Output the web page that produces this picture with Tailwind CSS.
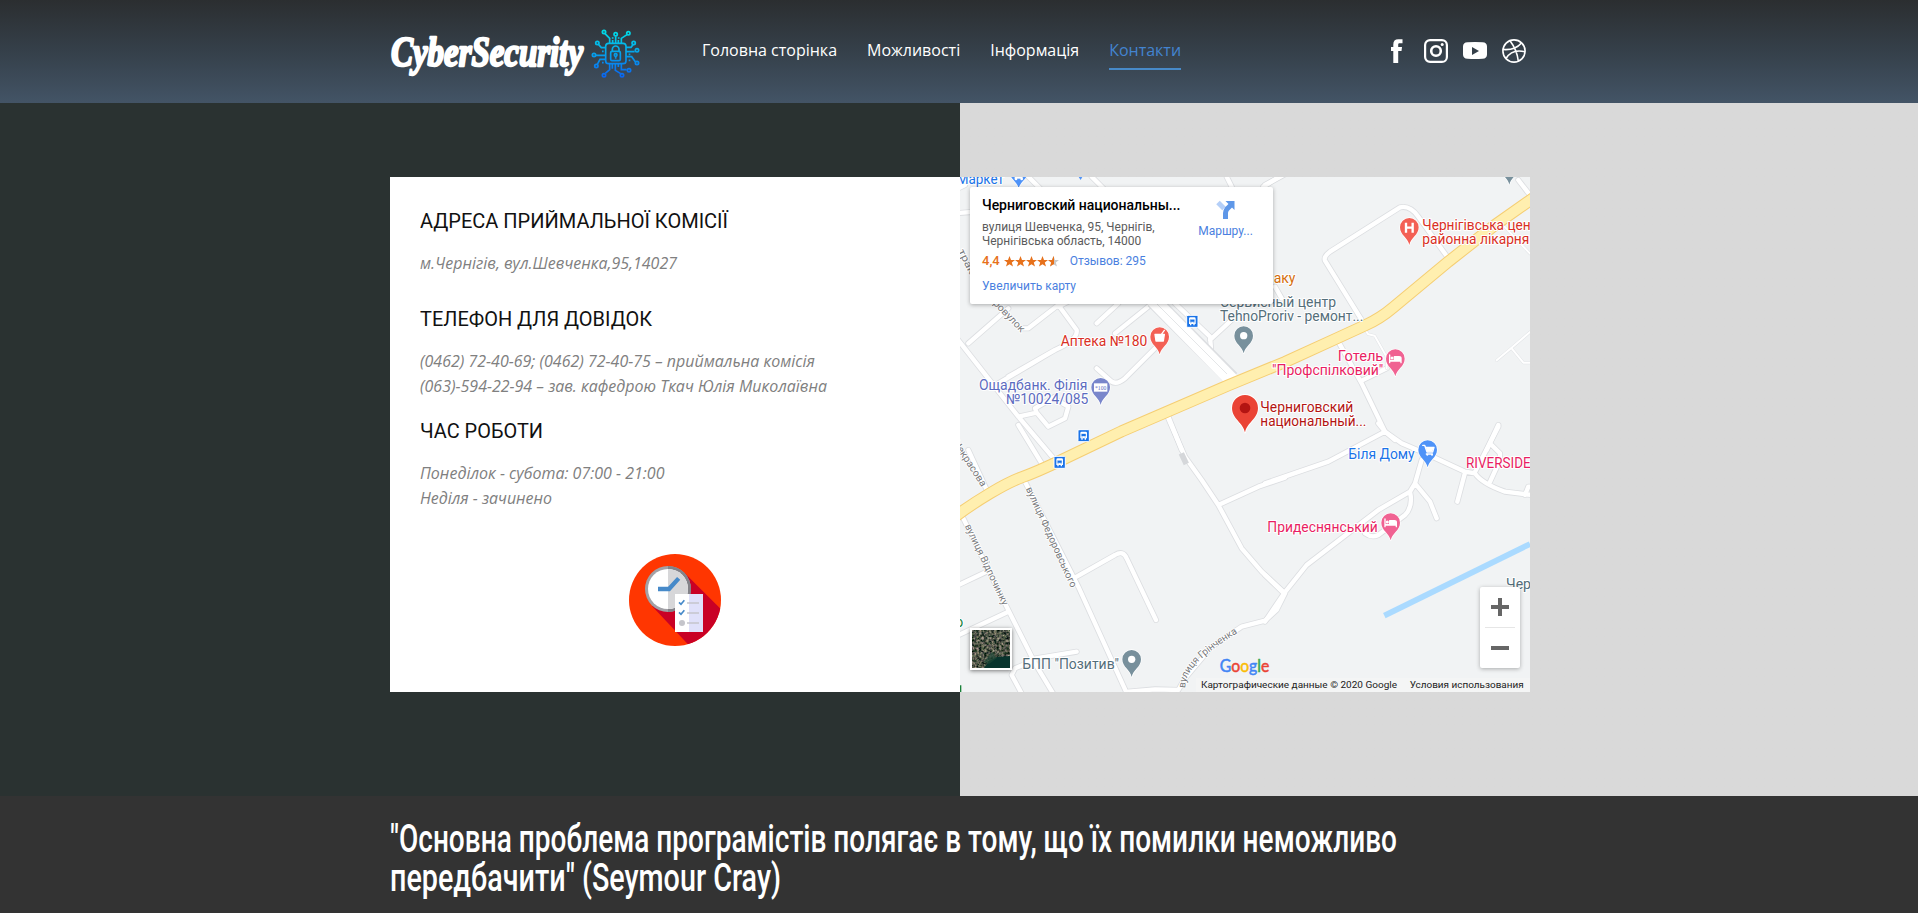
<!DOCTYPE html>
<html lang="uk">
<head>
<meta charset="utf-8">
<title>CyberSecurity – Контакти</title>
<script src="https://cdn.jsdelivr.net/npm/@tailwindcss/browser@4"></script>
</head>
<body class="h-[913px] overflow-hidden bg-[#333333] font-['Open_Sans',sans-serif]">
<header class="flex h-[103px] bg-linear-to-b from-[#2b2e30] via-[#35404a] to-[#435466]">
  <div class="mx-auto flex w-[1138px]">
    <a class="flex w-[312px] pt-[28px]">
      <svg class="h-[52px] w-[200px] overflow-visible" viewBox="0 0 200 52"><text x="1" y="38" textLength="192" lengthAdjust="spacingAndGlyphs" stroke-linejoin="round" class="fill-white stroke-white stroke-[2.4px] font-['Liberation_Serif',serif] text-[42px] font-bold italic">CyberSecurity</text></svg>
      <svg class="h-[50px] w-[50px]" viewBox="630 84 150 150" fill="none" stroke="url(#cy)" stroke-width="5">
        <defs><linearGradient id="cy" gradientUnits="userSpaceOnUse" x1="0" y1="88" x2="0" y2="233"><stop offset="0" stop-color="#00e0e6"/><stop offset="1" stop-color="#0a63f2"/></linearGradient></defs>
        <rect x="677" y="130" width="61" height="61" rx="9"/>
        <rect x="692" y="154" width="29" height="28" rx="4"/><path d="M697 154v-6a10 10 0 0 1 20 0v6M707 168v8"/><circle cx="707" cy="165" r="4"/>
        <path d="M689 129V115L675 101M707 129V109M724 129V115L741 104M677 143H664L656 134M677 166H648M677 178H660L652 193M738 142H753L759 134M738 155H764M738 170H755L766 185M689 191V209L676 220M706 191V211L722 221M724 191V209H740M715 129V120M698 129V120M697 191V206M715 191V201"/>
        <circle cx="672" cy="96" r="5"/><circle cx="707" cy="103" r="5"/><circle cx="745" cy="100" r="5"/><circle cx="652" cy="129" r="5"/><circle cx="642" cy="165" r="5"/><circle cx="649" cy="198" r="5"/><circle cx="761" cy="129" r="5"/><circle cx="771" cy="151" r="5"/><circle cx="771" cy="189" r="5"/><circle cx="672" cy="226" r="5"/><circle cx="726" cy="226" r="5"/><circle cx="747" cy="211" r="5"/>
        <path d="M666 154h5M746 163h5M746 181h5M666 188h5M698 112v4M716 112v4"/>
      </svg>
    </a>
    <nav class="flex w-[682.5px] gap-[30px] pt-[38px] text-[16px] leading-[24px] text-white">
      <a>Головна сторінка</a><a>Можливості</a><a>Інформація</a>
      <a class="h-[32px] border-b-2 border-[#478ac9] text-[#4384d0]">Контакти</a>
    </nav>
    <div class="flex gap-[15px] pt-[38.5px]">
      <svg class="h-6 w-6" viewBox="0 0 24 24" fill="#fff"><path d="M8.300 24V12H6V8h2.300V5.400C8.300 2 10 .2 13.300.2H17.500v4h-2.900c-1.200 0-1.400.6-1.400 1.600V8H17l-.5 4h-3.300v12z"/></svg>
      <svg class="h-6 w-6" viewBox="0 0 24 24" fill="none" stroke="#fff"><rect x="1.1" y="1.1" width="21.8" height="21.8" rx="5" stroke-width="2.2"/><circle cx="12" cy="12" r="4.8" stroke-width="2.6"/><circle cx="18.2" cy="5.6" r="1.5" fill="#fff" stroke="none"/></svg>
      <svg class="h-6 w-6" viewBox="0 0 24 24" fill="#fff" fill-rule="evenodd"><path d="M4.500 3.300Q12 2.600 19.500 3.300Q24 3.500 24 7.500V15.500Q24 19.600 19.500 19.800Q12 20.400 4.500 19.800Q0 19.600 0 15.500V7.500Q0 3.500 4.500 3.300zM9 8v8l7-4z"/></svg>
      <svg class="h-6 w-6" viewBox="0 0 24 24" fill="none" stroke="#fff" stroke-width="1.6"><circle cx="12" cy="12" r="11.1"/><path d="M8 1.800Q15 11 16.300 22M1 10.500Q13 11.500 19.500 4M4 19.500Q10 9.500 23 12.800"/></svg>
    </div>
  </div>
</header>

<main class="grid h-[693px] grid-cols-[960px_958px] bg-linear-to-r from-[#2a3231] from-[960px] to-[#d9d9d9] to-[960px]">
  <section class="mt-[74px] ml-[390px] h-[515px] w-[570px] bg-white pl-[30px]">
    <svg class="block h-[340px] w-[500px] font-['Open_Sans',sans-serif] text-[16.5px]" viewBox="0 0 500 340">
      <g class="fill-[#111111] font-['Roboto',sans-serif] text-[20px]">
        <text y="51" x="0" textLength="308" lengthAdjust="spacingAndGlyphs">АДРЕСА ПРИЙМАЛЬНОЇ КОМІСІЇ</text>
        <text y="149" x="0" textLength="232" lengthAdjust="spacingAndGlyphs">ТЕЛЕФОН ДЛЯ ДОВІДОК</text>
        <text y="261" x="0" textLength="123" lengthAdjust="spacingAndGlyphs">ЧАС РОБОТИ</text>
      </g>
      <g class="fill-[#808080] italic">
        <text y="92" x="0" textLength="257" lengthAdjust="spacingAndGlyphs">м.Чернігів, вул.Шевченка,95,14027</text>
        <text y="190" x="0" textLength="395" lengthAdjust="spacingAndGlyphs">(0462) 72-40-69; (0462) 72-40-75 – приймальна комісія</text>
        <text y="215" x="0" textLength="407" lengthAdjust="spacingAndGlyphs">(063)-594-22-94 – зав. кафедрою Ткач Юлія Миколаївна</text>
        <text y="302" x="0" textLength="244.500" lengthAdjust="spacingAndGlyphs">Понеділок - субота: 07:00 - 21:00</text>
        <text y="327" x="0" textLength="132" lengthAdjust="spacingAndGlyphs">Неділя - зачинено</text>
      </g>
    </svg>
    <svg class="mt-[37px] ml-[209px] block h-[92px] w-[92px]" viewBox="87 72 276 276">
      <defs><clipPath id="disc"><circle cx="225" cy="210" r="138"/></clipPath></defs>
      <g clip-path="url(#disc)"><rect x="87" y="72" width="276" height="276" fill="#ff3601"/><path d="M253 128L373 248V360H280L156 228z" fill="#c90125"/></g>
      <circle cx="204" cy="177" r="69" fill="#a2a1a6"/><path d="M204 108a69 69 0 0 1 0 138z" fill="#838288"/>
      <circle cx="204" cy="177" r="60" fill="#fff"/><path d="M204 117a60 60 0 0 1 0 120z" fill="#d7d7d9"/>
      <path d="M174 177H207L236 145" fill="none" stroke="#478ac9" stroke-width="13"/>
      <path fill="#fff" d="M225 192h42v114h-42z"/><path fill="#e0e1fa" d="M267 192h42v114h-42z"/>
      <path d="M237 217l6 6 10-12M237 247l6 6 10-12" fill="none" stroke="#478ac9" stroke-width="5"/><circle cx="246" cy="279" r="9" fill="#c5c5cb"/>
      <path d="M261 219h36M261 249h36M261 279h36" stroke="#c5c5cb" stroke-width="5"/>
    </svg>
  </section>

  <section class="relative mt-[74px] h-[515px] w-[570px] overflow-hidden bg-[#f1f3f4] font-['Roboto',sans-serif]">
    <svg class="block h-[515px] w-[570px]" viewBox="0 0 1710 1545" stroke-linecap="round" stroke-linejoin="round">
      <defs>
        <path id="pin" d="M0 53C-4 31-28 24-28 0A28 28 0 0 1 28 0C28 24 4 31 0 53z" stroke="#fff" stroke-width="4" paint-order="stroke"/>
        <g id="bus"><rect x="-17" y="-18" width="34" height="36" rx="3" fill="#1a73e8" stroke="#fff" stroke-width="3"/><path d="M-10-8q0-4 4-4H6q4 0 4 4V8H7v4H3V8H-3v4H-7V8h-3z" fill="#fff"/><path d="M-6-5H6V1H-6zM-6 4h3M3 4h3" fill="#1a73e8" stroke="#1a73e8" stroke-width="1"/></g>
        <g id="bed"><path d="M-17-11V12M-17 7H17V12M17 7V-1Q17-6 11-6H-3V6H-15" fill="none" stroke="#fff" stroke-width="4"/><path d="M-3-6H12Q17-6 17 0V7H-3z" fill="#fff" stroke="none"/><circle cx="-10" cy="-2" r="4.500" fill="#fff"/></g>
        <g id="roads" fill="none">
          <g transform="translate(-15,-21)">
            <path d="M0 498L190 740L300 870M0 130L60 125M0 40L45 30M40 520L160 415M130 640L300 540Q370 510 365 480L310 405L220 475H200M310 410L340 395M300 540L160 620M425 460L490 400M580 410L480 490M600 535L510 625Q485 645 470 635L425 595M190 740L245 728L280 770L330 745L340 710L305 690M245 728L240 715L300 680M410 20L450 60M815 20L830 50M925 50L990 10M640 740L680 840M660 400L765 500L768 535M765 510L835 445M220 20L260 60M0 60L30 45"/>
          </g>
          <g transform="translate(915,-21)">
            <path d="M0 45L65 10M550 265L460 140Q435 105 405 112L195 245Q175 260 180 272L290 450M760 30L810 95M30 350L50 385M220 515L290 640L360 785L390 810M290 632L365 595M700 765L665 840"/>
          </g>
          <g transform="translate(-15,759)">
            <path d="M190-15L260 100M40 60L100 190M640-35L690 80L740 150L790 225L860 355L920 425L990 490M790 225L910 170L990 143M25 265L120 460L240 700M0 470L95 425M0 620L160 545M240 690L180 715L170 735L205 800M215 690L365 665M210 155L370 470L520 800M365 440L480 375Q505 360 515 385L603 570M990 490L965 540L930 572L860 590L770 650L690 745L670 780L600 778L520 785M240 700L300 800"/>
          </g>
          <g transform="translate(915,759)">
            <path d="M0 160L190 95L360 5L410 40L480 70L600 125L630 130Q650 160 720 185L800 195M360 5L340-20M700-10L628 130M680 45L705 70L705 90L673 160M600 128L577 215M470 90L450 160L435 185L340 240L125 405L57 490L0 575M450 160L495 215L515 265M435 185Q445 230 420 255L380 285L340 315Q320 325 300 310M0 435L57 490M780 195L790 170H800"/>
          </g>
        </g>
      </defs>
      <use href="#roads" stroke="#dcdee1" stroke-width="18"/>
      <use href="#roads" stroke="#fff" stroke-width="13"/>
      <g fill="none"><path d="M1610 550L1653 514L1710 465M1655 514L1690 557H1710M1215 458L1225 472L1244 476L1280 540V574M1630 145L1710 230" stroke="#e1e3e6" stroke-width="9"/><path d="M1610 550L1653 514L1710 465M1655 514L1690 557H1710M1215 458L1225 472L1244 476L1280 540V574M1630 145L1710 230" stroke="#fff" stroke-width="6"/></g>
      <path d="M580 370L815 605" stroke="#dcdee1" stroke-width="48" stroke-linecap="butt"/><path d="M578 368L818 612" stroke="#fff" stroke-width="42" stroke-linecap="butt"/><path d="M578 368L800 590" stroke="#e4e6e8" stroke-width="3"/>
      <path d="M-15 1019Q30 985 90 949T190 899T305 849L485 763L805 625L975 555L1130 484L1215 445Q1260 425 1300 391L1465 254L1605 144L1730 56" fill="none" stroke="#f5ce73" stroke-width="36"/>
      <path d="M-15 1019Q30 985 90 949T190 899T305 849L485 763L805 625L975 555L1130 484L1215 445Q1260 425 1300 391L1465 254L1605 144L1730 56" fill="none" stroke="#ffefaf" stroke-width="30"/>
      <path d="M1273 1316L1710 1101" stroke="#aadaff" stroke-width="17" stroke-linecap="butt"/>
      <path d="M664 829L679 861" stroke="#d5d7da" stroke-width="17" stroke-linecap="butt"/>

      <g fill="#f36055"><use href="#pin" x="599" y="479"/><use href="#pin" x="1348" y="151"/></g>
      <g fill="#f06292"><use href="#pin" x="1306" y="545"/><use href="#pin" x="1292" y="1037"/></g>
      <g fill="#78909c"><use href="#pin" x="851" y="476"/><use href="#pin" x="515" y="1447"/><use href="#pin" x="1648" y="-30"/></g>
      <g fill="#4f93f8"><use href="#pin" x="1403" y="818"/><use href="#pin" x="176" y="-18"/></g>
      <use href="#pin" x="422" y="631" fill="#7986cb"/>
      <circle cx="851" cy="476" r="11" fill="#fff"/><circle cx="515" cy="1447" r="11" fill="#fff"/>
      <path d="M1338 137v30M1358 137v30M1338 152h20" stroke="#fff" stroke-width="7" stroke-linecap="butt"/>
      <path d="M585 472h28l-3 20h-22zM604 472l9-12" fill="#fff" stroke="#fff" stroke-width="4"/>
      <rect x="402" y="619" width="40" height="25" fill="#fff"/><text x="405" y="638" textLength="34" lengthAdjust="spacingAndGlyphs" class="fill-[#5c6bc0] font-['Liberation_Serif',serif] text-[18px]">*100</text>
      <use href="#bed" x="1306" y="545"/><use href="#bed" x="1292" y="1037"/>
      <path d="M1388 805h6l7 20h17l4-14h-24M1399 831h18" fill="none" stroke="#fff" stroke-width="4"/><path d="M1397 810h24l-4 14h-16z" fill="#fff"/><circle cx="1402" cy="833" r="3" fill="#fff"/><circle cx="1416" cy="833" r="3" fill="#fff"/>
      <path d="M164-5v10h24v-10" fill="#fff"/><circle cx="168" cy="6" r="4" fill="#fff"/><circle cx="185" cy="6" r="4" fill="#fff"/><path d="M356 0h11l-5 9z" fill="#4f93f8"/>
      <g transform="translate(855,693) scale(1.390)"><use href="#pin" fill="#ea4335"/><circle r="11.500" fill="#b31412"/></g>
      <use href="#bus" x="697" y="433"/><use href="#bus" x="371" y="776"/><use href="#bus" x="299" y="856"/>

      <g class="text-[42px]" stroke="#fff" stroke-width="6" paint-order="stroke">
        <g fill="#d93025">
          <text x="302" y="507" textLength="260" lengthAdjust="spacingAndGlyphs">Аптека №180</text>
          <text x="1387" y="159" textLength="325" lengthAdjust="spacingAndGlyphs">Чернігівська цен</text>
          <text x="1387" y="201" textLength="321" lengthAdjust="spacingAndGlyphs">районна лікарня</text>
        </g>
        <g fill="#5c6bc0">
          <text x="57" y="639" textLength="325" lengthAdjust="spacingAndGlyphs">Ощадбанк. Філія</text>
          <text x="138" y="681" textLength="247" lengthAdjust="spacingAndGlyphs">№10024/085</text>
        </g>
        <g fill="#e91e63">
          <text x="1133" y="552" textLength="137" lengthAdjust="spacingAndGlyphs">Готель</text>
          <text x="936" y="594" textLength="334" lengthAdjust="spacingAndGlyphs">"Профспілковий"</text>
          <text x="922" y="1065" textLength="331" lengthAdjust="spacingAndGlyphs">Придеснянський</text>
          <text x="1518" y="873" textLength="194" lengthAdjust="spacingAndGlyphs">RIVERSIDE</text>
        </g>
        <g fill="#546e7a">
          <text x="780" y="390" textLength="348" lengthAdjust="spacingAndGlyphs">Сервисный центр</text>
          <text x="780" y="432" textLength="430" lengthAdjust="spacingAndGlyphs">TehnoProriv - ремонт...</text>
          <text x="187" y="1476" textLength="290" lengthAdjust="spacingAndGlyphs">БПП "Позитив"</text>
          <text x="1638" y="1236" textLength="75" lengthAdjust="spacingAndGlyphs">Чер</text>
        </g>
        <g fill="#b31412">
          <text x="901" y="705" textLength="279" lengthAdjust="spacingAndGlyphs">Черниговский</text>
          <text x="901" y="747" textLength="318" lengthAdjust="spacingAndGlyphs">национальный...</text>
        </g>
        <g fill="#1a73e8">
          <text x="1165" y="846" textLength="199" lengthAdjust="spacingAndGlyphs">Біля Дому</text>
          <text x="-10" y="21" textLength="142" lengthAdjust="spacingAndGlyphs">Маркет</text>
        </g>
        <text x="941" y="318" fill="#d56e0c">аку</text>
        <text x="-14" y="1349" fill="#188038">о</text>
      </g>
      <path d="M0 1525h4v20H0z" fill="#188038"/>
      <g class="fill-[#77797c] text-[30px]" stroke="#fff" stroke-width="5" paint-order="stroke">
        <text transform="translate(197,935) rotate(65.500)" textLength="328" lengthAdjust="spacingAndGlyphs">вулиця Федоровського</text>
        <text transform="translate(14,1047) rotate(64.500)" textLength="266" lengthAdjust="spacingAndGlyphs">вулиця Відпочинку</text>
        <text transform="translate(-22,797) rotate(57)" textLength="160" lengthAdjust="spacingAndGlyphs">Некрасова</text>
        <text transform="translate(98,380) rotate(46)" textLength="122" lengthAdjust="spacingAndGlyphs">ровулок</text>
        <text transform="translate(-6,222) rotate(64)" textLength="80" lengthAdjust="spacingAndGlyphs">трак</text>
        <path id="hr" d="M675 1534Q678 1485 725 1445Q770 1405 838 1365" fill="none" stroke="none"/>
        <text><textPath href="#hr" textLength="238">вулиця Грінченка</textPath></text>
      </g>
      <text x="779" y="1484" textLength="149" lengthAdjust="spacingAndGlyphs" stroke-width="1.500" class="font-['Lato',sans-serif] text-[50px]"><tspan fill="#4285f4" stroke="#4285f4">G</tspan><tspan fill="#ea4335" stroke="#ea4335">o</tspan><tspan fill="#fbbc05" stroke="#fbbc05">o</tspan><tspan fill="#4285f4" stroke="#4285f4">g</tspan><tspan fill="#34a853" stroke="#34a853">l</tspan><tspan fill="#ea4335" stroke="#ea4335">e</tspan></text>
      <rect x="708" y="1503" width="1002" height="42" fill="#f5f5f5" opacity=".7"/>
      <g class="fill-[#222222] text-[27px]">
        <text x="723" y="1532" textLength="588" lengthAdjust="spacingAndGlyphs">Картографические данные © 2020 Google</text>
        <text x="1349" y="1532" textLength="342" lengthAdjust="spacingAndGlyphs">Условия использования</text>
      </g>
    </svg>

    <div class="absolute top-[10px] left-[10px] flex h-[117px] w-[303px] rounded-[2px] bg-white pl-[12px] text-[12px] leading-[14px] text-[#4a7fe0] shadow-[0_1px_4px_rgba(0,0,0,0.3)]">
      <div class="w-[208px] whitespace-nowrap">
        <div class="pt-[9px] text-[14px] leading-[18px] font-medium tracking-[-0.03px] text-black">Черниговский национальны...</div>
        <div class="mt-[6px] text-[#5b5b5b]">вулиця Шевченка, 95, Чернігів,<br>Чернігівська область, 14000</div>
        <div class="mt-[6px] flex items-center"><span class="text-[13px] font-medium text-[#e7711b]">4,4</span>
          <svg class="ml-[4px] h-[11px] w-[55px]" viewBox="0 0 55 11"><defs><path id="star" d="M5.500 0L7 4h4L7.800 6.500 9 10.500 5.500 8.200 2 10.500 3.200 6.500 0 4h4z"/><clipPath id="half"><path d="M0 0h6v11H0z"/></clipPath></defs><g fill="#e7711b"><use href="#star"/><use href="#star" x="11"/><use href="#star" x="22"/><use href="#star" x="33"/></g><use href="#star" x="44" fill="#c9c9c9"/><g transform="translate(44)"><use href="#star" fill="#e7711b" clip-path="url(#half)"/></g></svg>
          <span class="ml-[11px]">Отзывов: 295</span></div>
        <div class="mt-[11px]">Увеличить карту</div>
      </div>
      <div class="flex w-[71px] flex-col items-center pt-[13px]">
        <svg class="h-[20px] w-[20px]" viewBox="0 0 20 20" fill="none"><path d="M2 2.500L8 8.500" stroke="#b4cff8" stroke-width="5"/><path d="M9.500 19V13Q9.500 11 11 9L15 5" stroke="#5e97e8" stroke-width="5"/><path d="M9.500 1H18.500V10z" fill="#5e97e8"/></svg>
        <span class="mt-[4px]">Маршру...</span>
      </div>
    </div>

    <div class="absolute top-[451px] left-[10px] h-[42px] w-[42px] border-2 border-white shadow-[0_1px_4px_rgba(0,0,0,0.5)]">
      <svg class="block h-[38px] w-[38px]" viewBox="0 0 38 38"><defs><filter id="land" x="0" y="0" width="1" height="1" color-interpolation-filters="sRGB"><feTurbulence type="fractalNoise" baseFrequency=".4" numOctaves="3" seed="4"/><feColorMatrix values="1.1 0 0 0 -.24  .9 .15 0 0 -.19  .8 0 .1 0 -.17  0 0 0 0 1"/></filter></defs><rect width="38" height="38" filter="url(#land)"/><path d="M12 38L17 31 25 27 38 26V38z" fill="#08342d"/><path d="M12 32l8-10 5 6-8 6z" fill="#1d4636" opacity=".7"/></svg>
    </div>

    <div class="absolute top-[410px] left-[520px] flex h-[81px] w-[40px] flex-col items-center rounded-[2px] bg-white shadow-[0_1px_4px_rgba(0,0,0,0.3)]">
      <svg class="h-[81px] w-[40px]" viewBox="0 0 40 81"><path d="M11 20h18M20 11v18M11 61h18" stroke="#666" stroke-width="4"/><path d="M5 40.500h30" stroke="#e6e6e6"/></svg>
    </div>
  </section>
</main>

<footer class="h-[117px] bg-[#333333] pl-[390px]">
  <svg class="block h-[117px] w-[1138px] fill-white font-['Roboto',sans-serif] text-[38.5px] font-medium" viewBox="0 0 1138 117">
    <text x="0" y="55.500" textLength="1007" lengthAdjust="spacingAndGlyphs">"Основна проблема програмістів полягає в тому, що їх помилки неможливо</text>
    <text x="0" y="94.500" textLength="391" lengthAdjust="spacingAndGlyphs">передбачити" (Seymour Cray)</text>
  </svg>
</footer>
</body>
</html>
